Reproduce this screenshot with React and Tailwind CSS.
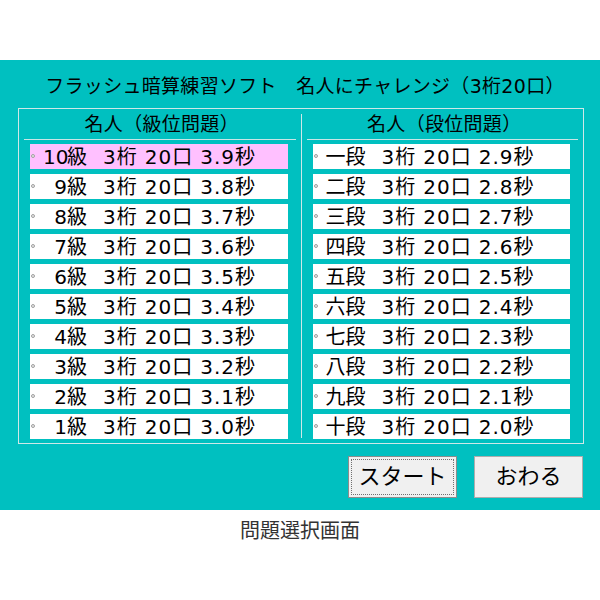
const kyu = [
  ['10', '3.9'], ['9', '3.8'], ['8', '3.7'], ['7', '3.6'], ['6', '3.5'],
  ['5', '3.4'], ['4', '3.3'], ['3', '3.2'], ['2', '3.1'], ['1', '3.0'],
];
const dan = [
  ['一', '2.9'], ['二', '2.8'], ['三', '2.7'], ['四', '2.6'], ['五', '2.5'],
  ['六', '2.4'], ['七', '2.3'], ['八', '2.2'], ['九', '2.1'], ['十', '2.0'],
];

const font = { fontFamily: '"DejaVu Sans", "Noto Sans CJK JP", sans-serif' };

const Row = ({ label, unit, sec, selected, numBox }) => (
  <div className={`relative flex items-center h-[25px] ${selected ? 'bg-[#ffc0ff]' : 'bg-white'}`}>
    <span className="absolute left-[1px] top-[10px] w-[4px] h-[4px] rounded-full border border-[#a0a0a0] bg-[#e8e8e8]" />
    <span className="pl-[13px] flex items-center text-[20px] leading-none text-black whitespace-pre">
      {numBox ? <span className="inline-block w-[24px] text-right">{label}</span> : <span>{label}</span>}
      <span>{unit}</span>
      <span className="ml-[16px] tracking-[1px]">3桁</span>
      <span className="ml-[7px] tracking-[1px]">20口</span>
      <span className="ml-[7px] tracking-[1px]">{sec}秒</span>
    </span>
  </div>
);

const Column = ({ title, children }) => (
  <div className="flex-1 flex flex-col">
    <div className="h-[30px] flex items-center justify-center text-[19px] leading-none text-black tracking-[0.3px] pl-[4px]">{title}</div>
    <div className="mx-[5px] h-px bg-[#c8e6e6]" />
    <div className="ml-[11px] mr-[13px] mt-[4px] flex flex-col gap-[5px]">{children}</div>
  </div>
);

export default function App() {
  return (
    <div className="w-[600px] h-[600px] bg-white pt-[60px]" style={font}>
      <div className="h-[450px] bg-[#00c0c0] flex flex-col">
        <div className="h-[48px] flex items-center justify-center text-[19px] leading-none text-black pt-[4px] pl-[10px] tracking-[0.3px]">
          フラッシュ暗算練習ソフト　名人にチャレンジ（3桁20口）
        </div>
        <div className="ml-[18px] w-[566px] h-[336px] border border-[#cfe8e8] flex">
          <Column title="名人（級位問題）">
            {kyu.map(([n, s], i) => (
              <Row key={n} label={n} unit="級" sec={s} selected={i === 0} numBox />
            ))}
          </Column>
          <div className="w-px my-[5px] bg-[#cfe8e8]" />
          <Column title="名人（段位問題）">
            {dan.map(([n, s]) => (
              <Row key={n} label={n} unit="段" sec={s} />
            ))}
          </Column>
        </div>
        <div className="flex justify-end gap-[17px] mt-[12px] mr-[17px]">
          <button className="w-[109px] h-[42px] bg-[#f0f0f0] border border-[#8c8c8c] p-[2px] text-[22px] text-black leading-none">
            <span className="flex w-full h-full items-center justify-center border border-dotted border-[#707070]">スタート</span>
          </button>
          <button className="w-[109px] h-[42px] bg-[#f0f0f0] border border-[#adadad] text-[22px] text-black leading-none flex items-center justify-center">
            おわる
          </button>
        </div>
      </div>
      <div className="h-[42px] flex items-center justify-center text-[20px] text-[#333333] leading-none">
        問題選択画面
      </div>
    </div>
  );
}
